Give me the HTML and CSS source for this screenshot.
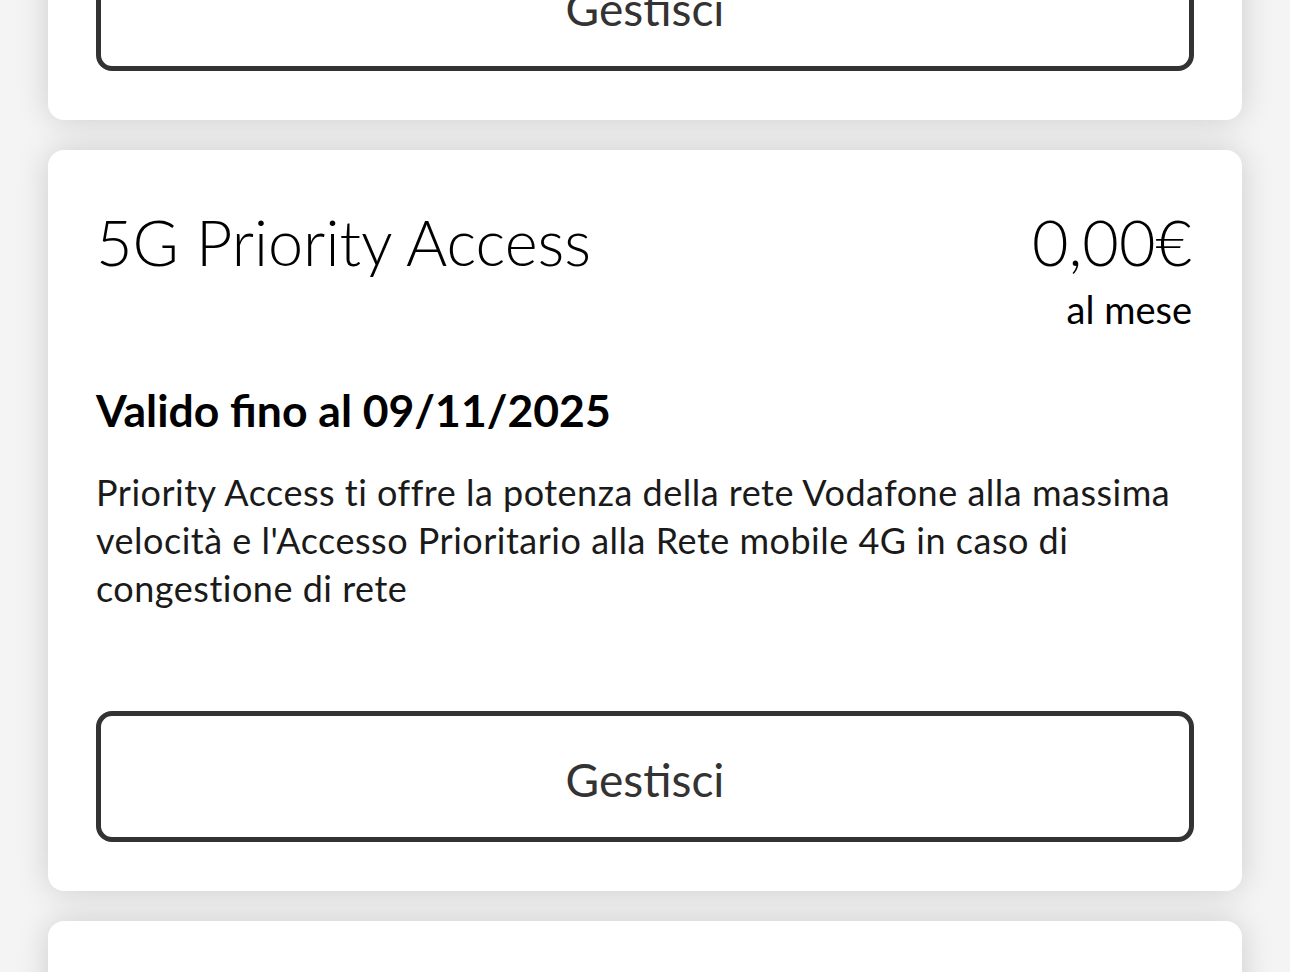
FILE: index.html
```html
<!DOCTYPE html>
<html lang="it">
<head>
<meta charset="utf-8">
<link rel="stylesheet" href="styles.css">
</head>
<body>
<main class="page">
  <section class="card card-first">
    <button class="btn">Gestisci</button>
  </section>
  <section class="card">
    <div class="head">
      <h2 class="title">5G Priority Access</h2>
      <div class="price">
        <div class="amount">0,00€</div>
        <div class="period">al mese</div>
      </div>
    </div>
    <h3 class="valid">Valido fino al 09/11/2025</h3>
    <p class="desc">Priority Access ti offre la potenza della rete Vodafone alla massima velocità e l'Accesso Prioritario alla Rete mobile 4G in caso di congestione di rete</p>
    <button class="btn">Gestisci</button>
  </section>
  <section class="card card-last"></section>
</main>
</body>
</html>
```
FILE: styles.css
```css
html, body {
  margin: 0;
  padding: 0;
  background: #f4f4f4;
  height: 100%;
  overflow: hidden;
}
.page {
  padding: 0 48px;
  display: flex;
  flex-direction: column;
  gap: 30px;
  font-family: Lato, "Open Sans", sans-serif;
  color: #000;
}
.card {
  background: #fff;
  border-radius: 16px;
  padding: 48px 48px 49px;
  box-shadow: 0 0 32px rgba(0, 0, 0, 0.16);
  display: flex;
  flex-direction: column;
}
.card-first {
  margin-top: -108px;
}
.card-last {
  height: 200px;
}
.head {
  display: flex;
  justify-content: space-between;
  align-items: flex-start;
  margin-top: 4px;
}
.title {
  margin: 0;
  font-weight: 300;
  font-size: 63px;
  line-height: 80px;
}
.price {
  text-align: right;
  margin-right: 2px;
}
.amount {
  font-weight: 300;
  font-size: 63px;
  line-height: 80px;
}
.period {
  font-size: 38px;
  line-height: 44px;
  margin-top: 5px;
}
.valid {
  margin: 53px 0 0;
  font-weight: 700;
  font-size: 44.5px;
  line-height: 52px;
}
.desc {
  margin: 32px 0 0;
  font-size: 36px;
  line-height: 48px;
  letter-spacing: 0.5px;
  color: #1a1a1a;
}
.btn {
  margin-top: 99px;
  height: 131px;
  padding: 6px 0 0;
  border: 5px solid #333;
  border-radius: 16px;
  background: #fff;
  font-family: Lato, "Open Sans", sans-serif;
  font-size: 46px;
  color: #333;
  cursor: pointer;
}
.card-first .btn {
  margin-top: 0;
}
```
